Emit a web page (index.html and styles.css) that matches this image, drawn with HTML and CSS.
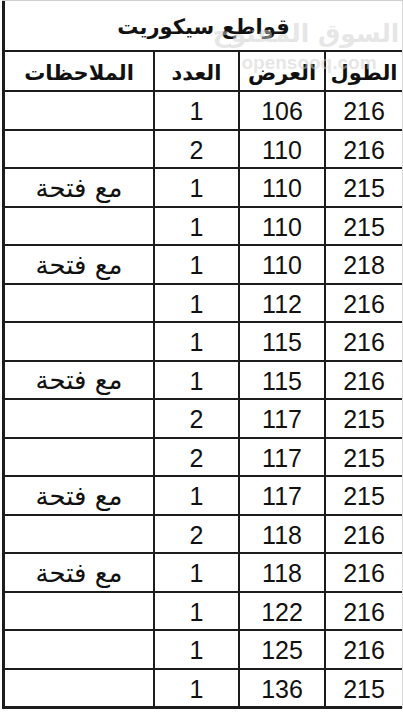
FILE: index.html
```html
<!DOCTYPE html>
<html lang="ar" dir="rtl">
<head>
<meta charset="utf-8">
<link rel="stylesheet" href="styles.css">
</head>
<body>
<div class="sheet">
  <div class="grid">
    <div class="cell title">قواطع سيكوريت</div>
    <div class="cell head">الطول</div>
    <div class="cell head">العرض</div>
    <div class="cell head">العدد</div>
    <div class="cell head">الملاحظات</div>

    <div class="cell num">216</div><div class="cell num">106</div><div class="cell num">1</div><div class="cell note"></div>
    <div class="cell num">216</div><div class="cell num">110</div><div class="cell num">2</div><div class="cell note"></div>
    <div class="cell num">215</div><div class="cell num">110</div><div class="cell num">1</div><div class="cell note">مع فتحة</div>
    <div class="cell num">215</div><div class="cell num">110</div><div class="cell num">1</div><div class="cell note"></div>
    <div class="cell num">218</div><div class="cell num">110</div><div class="cell num">1</div><div class="cell note">مع فتحة</div>
    <div class="cell num">216</div><div class="cell num">112</div><div class="cell num">1</div><div class="cell note"></div>
    <div class="cell num">216</div><div class="cell num">115</div><div class="cell num">1</div><div class="cell note"></div>
    <div class="cell num">216</div><div class="cell num">115</div><div class="cell num">1</div><div class="cell note">مع فتحة</div>
    <div class="cell num">215</div><div class="cell num">117</div><div class="cell num">2</div><div class="cell note"></div>
    <div class="cell num">215</div><div class="cell num">117</div><div class="cell num">2</div><div class="cell note"></div>
    <div class="cell num">215</div><div class="cell num">117</div><div class="cell num">1</div><div class="cell note">مع فتحة</div>
    <div class="cell num">216</div><div class="cell num">118</div><div class="cell num">2</div><div class="cell note"></div>
    <div class="cell num">216</div><div class="cell num">118</div><div class="cell num">1</div><div class="cell note">مع فتحة</div>
    <div class="cell num">216</div><div class="cell num">122</div><div class="cell num">1</div><div class="cell note"></div>
    <div class="cell num">216</div><div class="cell num">125</div><div class="cell num">1</div><div class="cell note"></div>
    <div class="cell num">215</div><div class="cell num">136</div><div class="cell num">1</div><div class="cell note"></div>
  </div>
  <div class="watermark">
    <div class="wm-ar">السوق المفتوح</div>
    <div class="wm-en" dir="ltr">opensooq.com</div>
  </div>
</div>
</body>
</html>
```
FILE: styles.css
```css
html, body {
  margin: 0;
  padding: 0;
  background: #ffffff;
}
body {
  width: 403px;
  height: 720px;
  overflow: hidden;
  font-family: "Liberation Sans", "DejaVu Sans", sans-serif;
  color: #111111;
}
.sheet {
  position: relative;
  width: 403px;
}
.grid {
  width: 397px;
  display: grid;
  grid-template-columns: 76px 84px 83px 148px;
  grid-template-rows: 49px 38px repeat(16, 36.5px);
  column-gap: 2px;
  row-gap: 2px;
  background: #1c1c1c;
  border-top: 1px solid #cfcfcf;
  border-right: 1px solid #d9d9d9;
  padding-left: 3px;
  padding-bottom: 2.5px;
}
.cell {
  background: #ffffff;
  display: flex;
  align-items: center;
  justify-content: center;
  white-space: nowrap;
}
.title {
  grid-column: 1 / -1;
  font-family: "DejaVu Sans", sans-serif;
  font-size: 21px;
  font-weight: bold;
  padding-top: 2px;
}
.head {
  font-family: "DejaVu Sans", sans-serif;
  font-size: 21px;
  font-weight: bold;
  padding-top: 4px;
}
.num {
  font-size: 25px;
  padding-top: 3px;
}
.note {
  font-family: "DejaVu Sans", sans-serif;
  font-size: 26px;
  padding-top: 1px;
}
.watermark {
  position: absolute;
  top: 14px;
  left: 226px;
  width: 160px;
  display: flex;
  flex-direction: column;
  align-items: center;
  pointer-events: none;
}
.wm-ar {
  font-family: "DejaVu Sans", sans-serif;
  font-size: 25px;
  font-weight: bold;
  color: rgba(205, 205, 205, 0.5);
  line-height: 40px;
  white-space: nowrap;
}
.wm-en {
  font-family: "Liberation Sans", sans-serif;
  font-size: 19px;
  font-weight: bold;
  color: rgba(205, 205, 205, 0.5);
  line-height: 18px;
  margin-left: 6px;
  white-space: nowrap;
}
```
